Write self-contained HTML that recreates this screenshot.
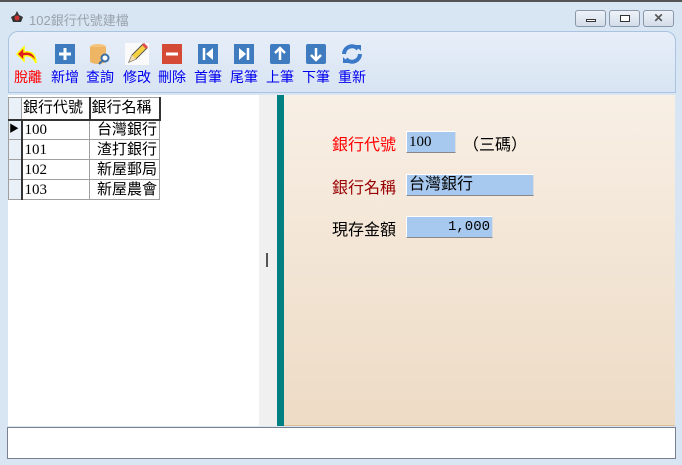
<!DOCTYPE html><html><head><meta charset="utf-8"><style>
*{margin:0;padding:0;box-sizing:border-box}
body{width:682px;height:465px;background:#d8e5f3;font-family:"Liberation Sans","Noto Sans CJK TC",sans-serif;position:relative;overflow:hidden}
.abs{position:absolute}
.title{left:29px;top:10px;font-size:13px;color:#9aa3ad}
.wb{top:10px;width:31px;height:17px;border:1px solid #8a97a8;border-radius:3px;background:linear-gradient(#eef3f9,#d3dde9)}
.tb{left:8px;top:31px;width:668px;height:62px;border:1px solid #a9c3e0;border-radius:10px 10px 0 0;background:linear-gradient(#e7eef8,#d8e4f3)}
.btn{top:43px;width:36px;text-align:center;font-size:14px;color:#0000ee}
.btn svg{display:block;margin:0 auto 2px}
.grid{left:8px;top:97px;font-size:15px;border-collapse:collapse;table-layout:fixed}
.grid td{border:1px solid #a0a0a0;height:20px;line-height:18px;padding:0 2px;white-space:nowrap;overflow:hidden}
.lbl{font-size:16px}
.inp{background:#a7c9ef;border-top:1px solid #fff;border-left:1px solid #fff;border-bottom:1px solid #888;border-right:1px solid #ddd;font-size:15px;padding:0 2px;height:22px;line-height:20px}
</style></head><body>
<div class="abs" style="left:0;top:0;width:682px;height:2px;background:#555"></div>
<svg class="abs" style="left:10px;top:11px" width="14" height="14"><polygon points="7,0 9,4 13,6 11,11 3,11 1,6 5,4" fill="#333"/><circle cx="7" cy="7" r="2.5" fill="#c33"/></svg>
<div class="abs title">102銀行代號建檔</div>
<div class="abs wb" style="left:575px"><div style="position:absolute;left:10px;top:8px;width:10px;height:3px;border:1px solid #333;background:#fff"></div></div>
<div class="abs wb" style="left:609px"><div style="position:absolute;left:10px;top:4px;width:10px;height:7px;border:1px solid #333;background:#fff"></div></div>
<div class="abs wb" style="left:643px;text-align:center;font-size:12px;line-height:15px;color:#555;font-weight:bold">✕</div>
<div class="abs tb"></div>
<div class="abs btn" style="left:10px;color:#f00"><svg width="24" height="22"><path d="M20 20 C20 10 14 8 8 9 L8 4 L1 11 L8 18 L8 13 C13 12 17 14 20 20Z" fill="#e02020" stroke="#ff0" stroke-width="1.5"/></svg>脫離</div>
<div class="abs btn" style="left:47px"><svg width="22" height="22"><rect x="1" y="1" width="20" height="20" fill="#3f7bbf"/><path d="M11 5v12M5 11h12" stroke="#fff" stroke-width="3"/></svg>新增</div>
<div class="abs btn" style="left:82px"><svg width="24" height="22"><ellipse cx="10" cy="4" rx="8" ry="3" fill="#f3c47a"/><rect x="2" y="4" width="16" height="14" fill="#eeb664"/><ellipse cx="10" cy="18" rx="8" ry="3" fill="#eeb664"/><circle cx="17" cy="15" r="3.5" fill="#fff" stroke="#3a6ea8" stroke-width="2"/><path d="M14 18l-3 3" stroke="#3a6ea8" stroke-width="2"/></svg>查詢</div>
<div class="abs btn" style="left:119px"><svg width="24" height="22"><rect x="0" y="0" width="24" height="22" fill="#fafafa"/><path d="M4 19l3-7 11-11 4 4-11 11z" fill="#f5d040" stroke="#555"/><path d="M4 19l3-7 4 4z" fill="#f3dcb0"/><path d="M18 1l4 4" stroke="#e05050" stroke-width="3"/></svg>修改</div>
<div class="abs btn" style="left:154px"><svg width="22" height="22"><rect x="1" y="1" width="20" height="20" fill="#d44a35"/><path d="M5 11h12" stroke="#fff" stroke-width="3"/></svg>刪除</div>
<div class="abs btn" style="left:190px"><svg width="22" height="22"><rect x="1" y="1" width="20" height="20" fill="#3f7bbf"/><path d="M7 5v12" stroke="#fff" stroke-width="2.5"/><path d="M16 5l-7 6 7 6z" fill="#fff"/></svg>首筆</div>
<div class="abs btn" style="left:226px"><svg width="22" height="22"><rect x="1" y="1" width="20" height="20" fill="#3f7bbf"/><path d="M15 5v12" stroke="#fff" stroke-width="2.5"/><path d="M6 5l7 6-7 6z" fill="#fff"/></svg>尾筆</div>
<div class="abs btn" style="left:262px"><svg width="22" height="22"><rect x="1" y="1" width="20" height="20" rx="2" fill="#3f7bbf"/><path d="M11 17V6M6 10l5-5 5 5" stroke="#fff" stroke-width="2.5" fill="none"/></svg>上筆</div>
<div class="abs btn" style="left:298px"><svg width="22" height="22"><rect x="1" y="1" width="20" height="20" rx="2" fill="#3f7bbf"/><path d="M11 5v11M6 12l5 5 5-5" stroke="#fff" stroke-width="2.5" fill="none"/></svg>下筆</div>
<div class="abs btn" style="left:334px"><svg width="24" height="22"><path d="M4 11a8 8 0 0 1 14-5" stroke="#3a78c8" stroke-width="4" fill="none"/><path d="M20 11a8 8 0 0 1-14 5" stroke="#3a78c8" stroke-width="4" fill="none"/><path d="M15 2l6 0 0 6z M9 20l-6 0 0-6z" fill="#3a78c8"/></svg>重新</div>
<div class="abs" style="left:8px;top:95px;width:251px;height:331px;background:#fff"></div>
<div class="abs" style="left:259px;top:95px;width:18px;height:331px;background:#f0f0f0"></div>
<div class="abs" style="left:266px;top:253px;width:2px;height:14px;background:#555"></div>
<div class="abs" style="left:277px;top:95px;width:7px;height:331px;background:#008080"></div>
<div class="abs" style="left:284px;top:95px;width:391px;height:331px;background:linear-gradient(#f8efe5,#eddbc5);border-bottom:1px solid #e0c090"></div>
<table class="abs grid" style="width:151px">
<colgroup><col style="width:13px"><col style="width:68px"><col style="width:70px"></colgroup>
<tr style="background:#fff"><td style="background:#eaf0f8;border-bottom:2px solid #333;height:22px"></td><td style="border-bottom:2px solid #333;border-right:2px solid #333;padding:0 1px">銀行代號</td><td style="border-bottom:2px solid #333;border-right:2px solid #333;padding:0 1px">銀行名稱</td></tr>
<tr><td style="background:#eaf0f8;border-right:2px solid #333;font-size:10px;padding:0">▶</td><td style="font-family:'Liberation Serif',serif">100</td><td style="text-align:right">台灣銀行</td></tr>
<tr><td style="background:#eaf0f8;border-right:2px solid #333"></td><td style="font-family:'Liberation Serif',serif">101</td><td style="text-align:right">渣打銀行</td></tr>
<tr><td style="background:#eaf0f8;border-right:2px solid #333"></td><td style="font-family:'Liberation Serif',serif">102</td><td style="text-align:right">新屋郵局</td></tr>
<tr><td style="background:#eaf0f8;border-right:2px solid #333"></td><td style="font-family:'Liberation Serif',serif">103</td><td style="text-align:right">新屋農會</td></tr>
</table>
<div class="abs lbl" style="left:332px;top:131px;color:#f00">銀行代號</div>
<div class="abs inp" style="left:406px;top:131px;width:50px;font-family:'Liberation Serif',serif">100</div>
<div class="abs lbl" style="left:463px;top:131px">（三碼）</div>
<div class="abs lbl" style="left:332px;top:174px;color:#900">銀行名稱</div>
<div class="abs inp" style="left:406px;top:174px;width:128px;font-size:16px">台灣銀行</div>
<div class="abs lbl" style="left:332px;top:216px">現存金額</div>
<div class="abs inp" style="left:406px;top:216px;width:87px;text-align:right;font-family:'Liberation Mono',monospace;font-size:14px">1,000</div>
<div class="abs" style="left:7px;top:427px;width:669px;height:32px;background:#fff;border:1px solid #7a8090"></div>
</body></html>
